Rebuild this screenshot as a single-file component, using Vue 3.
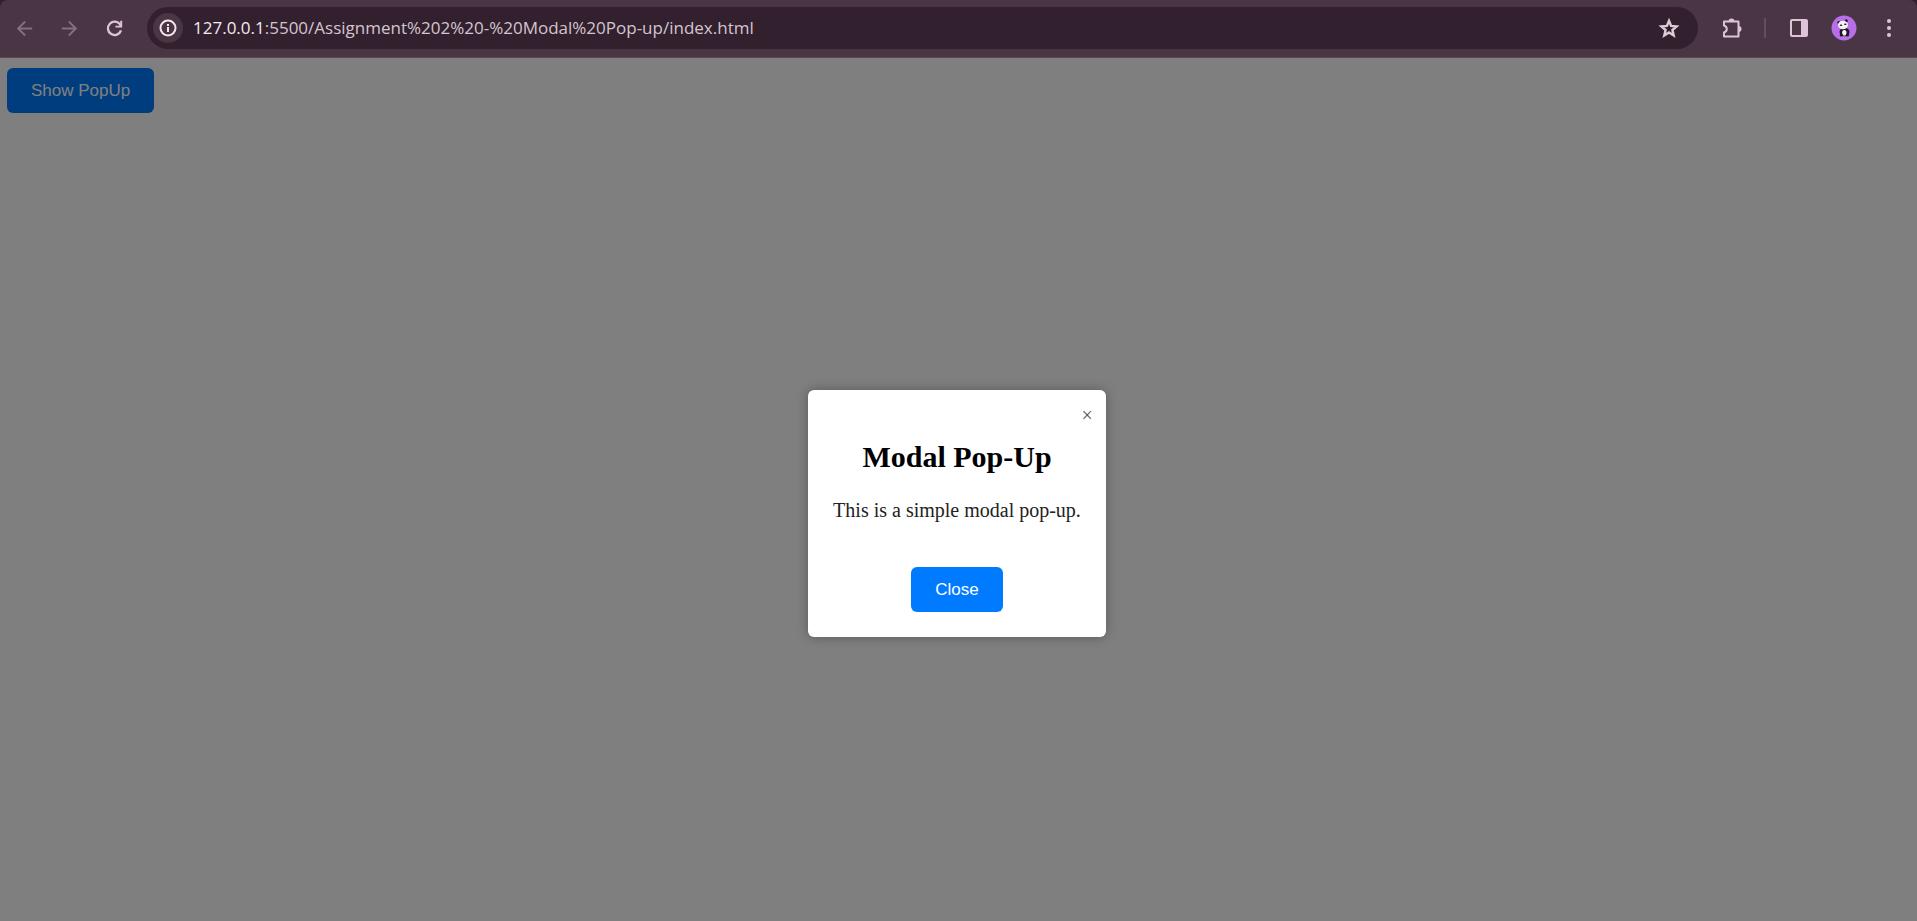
<script setup>
import { ref } from 'vue'

const open = ref(true)
</script>

<template>
  <div class="window">
    <header class="toolbar">
      <button class="tool dim" aria-label="Back">
        <svg width="23" height="23" viewBox="0 0 24 24"><path d="M20 10.900H7.900l5.500-5.500L12 3.900 3.900 12l8.100 8.100 1.400-1.500-5.500-5.500H20z" /></svg>
      </button>
      <button class="tool dim" aria-label="Forward">
        <svg width="23" height="23" viewBox="0 0 24 24"><path d="M4 10.900h12.100l-5.500-5.500L12 3.900l8.100 8.100-8.100 8.100-1.400-1.500 5.500-5.500H4z" /></svg>
      </button>
      <button class="tool" aria-label="Reload">
        <svg width="23" height="23" viewBox="0 0 24 24">
          <path d="M18 8A7 7 0 1 0 18.800 14" class="stroke bold" />
          <path d="M20 4v7h-7V9.200l3.600-.2L18 7.500V4z" />
        </svg>
      </button>

      <div class="omnibox">
        <button class="info" aria-label="View site information">
          <svg width="20" height="20" viewBox="0 0 20 20">
            <circle cx="10" cy="10" r="7.500" class="stroke" />
            <path d="M9 9h2v5H9zM9 6h2v2H9z" />
          </svg>
        </button>
        <div class="url"><span class="host">127.0.0.1</span>:5500/Assignment%202%20-%20Modal%20Pop-up/index.html</div>
        <button class="star" aria-label="Bookmark this tab">
          <svg width="24" height="24" viewBox="0 0 24 24">
            <path d="M12 4.800l2.100 5.100 5.500.5-4.200 3.600 1.300 5.400-4.700-2.900-4.700 2.900 1.300-5.400-4.200-3.600 5.500-.5z" class="stroke bold" />
          </svg>
        </button>
      </div>

      <button class="tool" aria-label="Extensions">
        <svg width="24" height="24" viewBox="0 0 24 24">
          <path d="M4 5.500h14.500v15H4v-4q2.800-1 2.800-3.500T4 9.500z" class="stroke joined" />
          <path d="M8.500 5.500a3 3 0 0 1 6 0zM18.500 10a3 3 0 0 1 0 6z" />
        </svg>
      </button>
      <span class="divider"></span>
      <button class="tool" aria-label="Side panel">
        <svg width="24" height="24" viewBox="0 0 24 24">
          <rect x="4" y="4" width="16" height="16" rx="1" class="stroke" />
          <path d="M14 4h6v16h-6z" />
        </svg>
      </button>
      <button class="tool" aria-label="Profile">
        <svg width="26" height="26" viewBox="0 0 26 26">
          <circle cx="13" cy="13" r="12.500" class="disc" />
          <circle cx="7.800" cy="7.500" r="1.500" class="black" />
          <circle cx="15.300" cy="5.800" r="1.500" class="black" />
          <ellipse cx="13.500" cy="17" rx="5" ry="4.200" class="black" />
          <ellipse cx="12" cy="10" rx="5" ry="4.200" class="white" />
          <ellipse cx="10" cy="10.300" rx="1.300" ry=".8" class="black" />
          <ellipse cx="14.300" cy="9.300" rx="1.300" ry=".8" class="black" />
          <ellipse cx="13.300" cy="17.800" rx="2.200" ry="2.800" class="white" />
          <circle cx="10.300" cy="20" r="1.600" class="black" />
          <circle cx="16.500" cy="20" r="1.600" class="black" />
        </svg>
      </button>
      <button class="tool" aria-label="Menu">
        <svg width="24" height="24" viewBox="0 0 24 24">
          <circle cx="12" cy="5" r="2" /><circle cx="12" cy="12" r="2" /><circle cx="12" cy="19" r="2" />
        </svg>
      </button>
    </header>

    <main class="page">
      <button class="action" @click="open = true">Show PopUp</button>
      <div v-if="open" class="overlay">
        <section class="modal" role="dialog" aria-labelledby="modal-title">
          <button class="dismiss" aria-label="Dismiss" @click="open = false">×</button>
          <h2 id="modal-title">Modal Pop-Up</h2>
          <p>This is a simple modal pop-up.</p>
          <button class="action" @click="open = false">Close</button>
        </section>
      </div>
    </main>
  </div>
</template>

<style>
body {
  margin: 0;
  background: #33202e;
}
</style>

<style scoped>
.window {
  display: flex;
  flex-direction: column;
  min-height: 100vh;
}

button {
  margin: 0;
  padding: 0;
  border: none;
  background: none;
  cursor: pointer;
}

.toolbar {
  display: flex;
  align-items: center;
  box-sizing: border-box;
  height: 58px;
  padding: 0 6px 1px 2px;
  border-bottom: 1px solid #5b4757;
  border-radius: 8px 8px 0 0;
  background: #4a3545;
}

svg {
  display: block;
  fill: #dfc3d8;
}

.stroke {
  fill: none;
  stroke: #dfc3d8;
  stroke-width: 2;
}

.bold {
  stroke-width: 2.4;
}

.joined {
  stroke-linejoin: round;
}

.tool {
  display: flex;
  flex: none;
  align-items: center;
  justify-content: center;
  width: 45px;
  height: 42px;
}

.dim svg {
  fill: #846f7f;
}

.omnibox {
  display: flex;
  flex: 1;
  align-items: center;
  height: 42px;
  margin: 0 11px 0 10px;
  padding: 0 17px 0 6px;
  border-radius: 21px;
  background: #33202e;
}

.info {
  display: flex;
  align-items: center;
  justify-content: center;
  width: 30px;
  height: 30px;
  border-radius: 50%;
  background: #4a3545;
}

.info svg {
  fill: #f3e3ee;
}

.info .stroke {
  stroke: #f3e3ee;
}

.url {
  flex: 1;
  margin-left: 10px;
  font: 17px/24px "Open Sans", "Noto Sans", sans-serif;
  white-space: nowrap;
  color: #d3c5cf;
}

.host {
  color: #f5eaf2;
}

.star .stroke {
  stroke: #dccdd8;
}

.divider {
  width: 2px;
  height: 20px;
  margin: 0 10px;
  background: #654d5f;
}

.disc {
  fill: #b76ee8;
}

.white {
  fill: #f4f0f6;
}

.black {
  fill: #1d1720;
}

.page {
  position: relative;
  flex: 1;
  padding: 10px 7px;
  background: #fff;
}

.action {
  padding: 0 24px;
  border-radius: 6px;
  background: #007bff;
  color: #fff;
  font: 17px/45px "Liberation Sans", Arial, sans-serif;
}

.overlay {
  position: absolute;
  inset: 0;
  display: flex;
  align-items: center;
  justify-content: center;
  padding: 47px 3px 0 0;
  background: rgba(0, 0, 0, 0.5);
}

.modal {
  position: relative;
  padding: 50px 25px 25px;
  border-radius: 6px;
  background: #fff;
  box-shadow: 0 0 12px rgba(0, 0, 0, 0.3);
  font-family: "Liberation Serif", "Times New Roman", serif;
  text-align: center;
}

.dismiss {
  position: absolute;
  top: 13px;
  right: 13px;
  color: #555;
  font: 20px/24px "Liberation Serif", "Times New Roman", serif;
}

h2 {
  margin: 0 0 25px;
  font-size: 30px;
  line-height: 34px;
}

p {
  margin: 0 0 45px;
  font-size: 20px;
  line-height: 23px;
  color: #222;
}
</style>
